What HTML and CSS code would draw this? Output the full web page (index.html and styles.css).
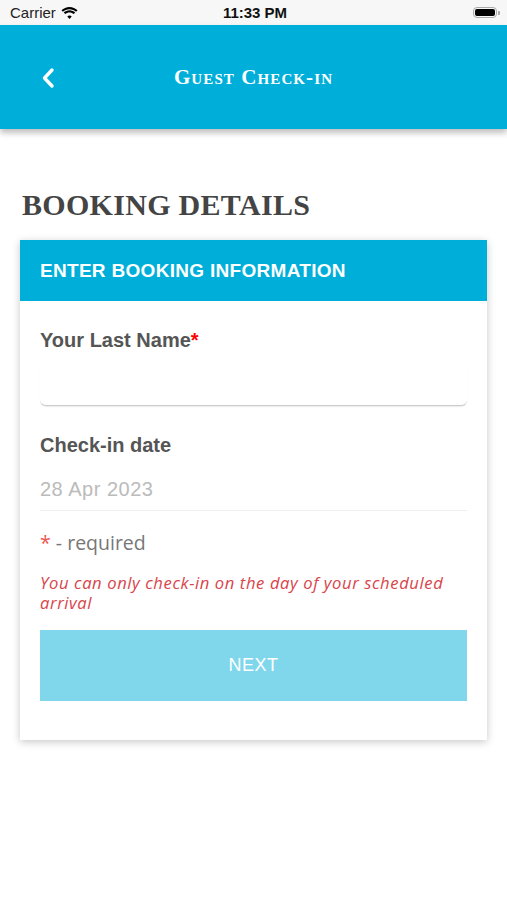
FILE: index.html
```html
<!DOCTYPE html>
<html lang="en">
<head>
  <meta charset="UTF-8" />
  <meta name="viewport" content="width=device-width, initial-scale=1.0"/>
  <title>Guest Check-in</title>
  <link rel="stylesheet" href="styles.css">
</head>
<body>
  <div class="status-bar">
    <div class="carrier">
      Carrier
      <svg class="wifi" width="17" height="12" viewBox="0 0 17 12">
        <path d="M8.5 2.2c2.6 0 4.9 1 6.6 2.6l1.4-1.5C14.4 1.3 11.6 0 8.5 0S2.6 1.3 0.5 3.3l1.4 1.5C3.6 3.2 5.9 2.2 8.5 2.2z" fill="#000"/>
        <path d="M8.5 5.4c1.7 0 3.2 0.7 4.3 1.7l1.4-1.5C12.7 4.2 10.7 3.3 8.5 3.3S4.3 4.2 2.8 5.6l1.4 1.5c1.1-1 2.6-1.7 4.3-1.7z" fill="#000"/>
        <path d="M8.5 8.5c0.9 0 1.6 0.3 2.2 0.9L8.5 12 6.3 9.4c0.6-0.6 1.3-0.9 2.2-0.9z" fill="#000"/>
      </svg>
    </div>
    <div class="clock">11:33 PM</div>
    <div class="battery">
      <span class="battery-body"><span class="battery-fill"></span></span>
      <span class="battery-tip"></span>
    </div>
  </div>

  <header class="app-header">
    <button class="back-btn" aria-label="Back">
      <svg width="16" height="22" viewBox="0 0 16 22">
        <path d="M12 3L4.5 11 12 19" fill="none" stroke="#fff" stroke-width="3.4" stroke-linecap="round" stroke-linejoin="round"/>
      </svg>
    </button>
    <h1 class="app-title">Guest Check-in</h1>
  </header>

  <main class="content">
    <h2 class="page-title">BOOKING DETAILS</h2>

    <section class="card">
      <div class="card-head">ENTER BOOKING INFORMATION</div>
      <div class="card-body">
        <label class="field-label" for="lastName">Your Last Name<span class="req">*</span></label>
        <input type="text" id="lastName" class="name-input"/>

        <label class="field-label date-label">Check-in date</label>
        <div class="date-value">28 Apr 2023</div>

        <p class="required-note"><span class="req-light">*</span> - required</p>
        <p class="warning">You can only check-in on the day of your scheduled arrival</p>

        <button class="next-btn">NEXT</button>
      </div>
    </section>
  </main>
</body>
</html>
```

FILE: styles.css
```css
body {
  margin: 0;
  font-family: "Liberation Sans", Arial, sans-serif;
  background: #fff;
  color: #555;
}

.status-bar {
  height: 25px;
  background: #f7f7f7;
  display: flex;
  align-items: center;
  justify-content: space-between;
  padding: 0 7px 0 10px;
  font-family: "Liberation Sans", Arial, sans-serif;
  font-size: 15px;
  color: #000;
}

.carrier {
  flex: 1;
  display: flex;
  align-items: center;
  gap: 5px;
  color: #222;
}

.clock {
  font-weight: bold;
  color: #111;
}

.battery {
  flex: 1;
  display: flex;
  justify-content: flex-end;
  align-items: center;
}

.battery-body {
  width: 24px;
  height: 11px;
  border: 1px solid #aaa;
  border-radius: 4px;
  padding: 1px;
  box-sizing: border-box;
  display: flex;
}

.battery-fill {
  flex: 1;
  background: #000;
  border-radius: 2px;
}

.battery-tip {
  width: 2px;
  height: 4px;
  background: #aaa;
  border-radius: 0 1px 1px 0;
  margin-left: 1px;
}

.app-header {
  height: 104px;
  background: #00afd9;
  display: flex;
  align-items: center;
  justify-content: center;
  position: relative;
  box-shadow: 0 4px 6px rgba(0, 0, 0, 0.25);
}

.back-btn {
  position: absolute;
  left: 40px;
  top: 42px;
  background: none;
  border: none;
  padding: 0;
  cursor: pointer;
}

.app-title {
  margin: 0;
  font-family: "Liberation Serif", "Times New Roman", serif;
  font-variant: small-caps;
  font-weight: bold;
  font-size: 21px;
  letter-spacing: 1.1px;
  color: #fff;
}

.content {
  padding: 59px 20px 40px;
}

.page-title {
  margin: 0 0 18px 2px;
  font-family: "Liberation Serif", "Times New Roman", serif;
  font-size: 30px;
  font-weight: bold;
  color: #444;
  letter-spacing: 0.3px;
}

.card {
  background: #fff;
  box-shadow: 0 2px 8px rgba(0, 0, 0, 0.22);
}

.card-head {
  background: #00afd9;
  color: #fff;
  font-weight: bold;
  font-size: 19px;
  letter-spacing: 0.3px;
  padding: 21px 20px 20px;
  line-height: 20px;
}

.card-body {
  padding: 28px 20px 39px;
}

.field-label {
  display: block;
  font-weight: bold;
  font-size: 20px;
  color: #555;
}

.req {
  color: #f00;
}

.name-input {
  display: block;
  width: 100%;
  box-sizing: border-box;
  height: 40px;
  margin-top: 14px;
  border: none;
  border-bottom: 1px solid #ccc;
  border-radius: 0 0 6px 6px;
  box-shadow: 0 1px 1px rgba(0, 0, 0, 0.08);
  outline: none;
  font-size: 18px;
}

.date-label {
  margin-top: 28px;
}

.date-value {
  margin-top: 21px;
  padding-bottom: 9px;
  border-bottom: 1px solid #eee;
  font-size: 20px;
  color: #bbb;
  letter-spacing: 0.5px;
}

.required-note {
  margin: 18px 0 0;
  font-family: "Open Sans", Lato, sans-serif;
  font-size: 19.5px;
  color: #777;
}

.req-light {
  color: #ef5350;
}

.warning {
  margin: 17px 0 0;
  padding-right: 10px;
  font-family: "Open Sans", Lato, sans-serif;
  font-style: italic;
  font-size: 16.6px;
  letter-spacing: 0.6px;
  line-height: 20px;
  color: #d9444a;
}

.next-btn {
  display: block;
  width: 100%;
  height: 71px;
  margin-top: 17px;
  border: none;
  background: #80d7ec;
  color: #fff;
  font-family: "Liberation Sans", Arial, sans-serif;
  font-size: 18px;
  letter-spacing: 0.5px;
  cursor: pointer;
}
```
